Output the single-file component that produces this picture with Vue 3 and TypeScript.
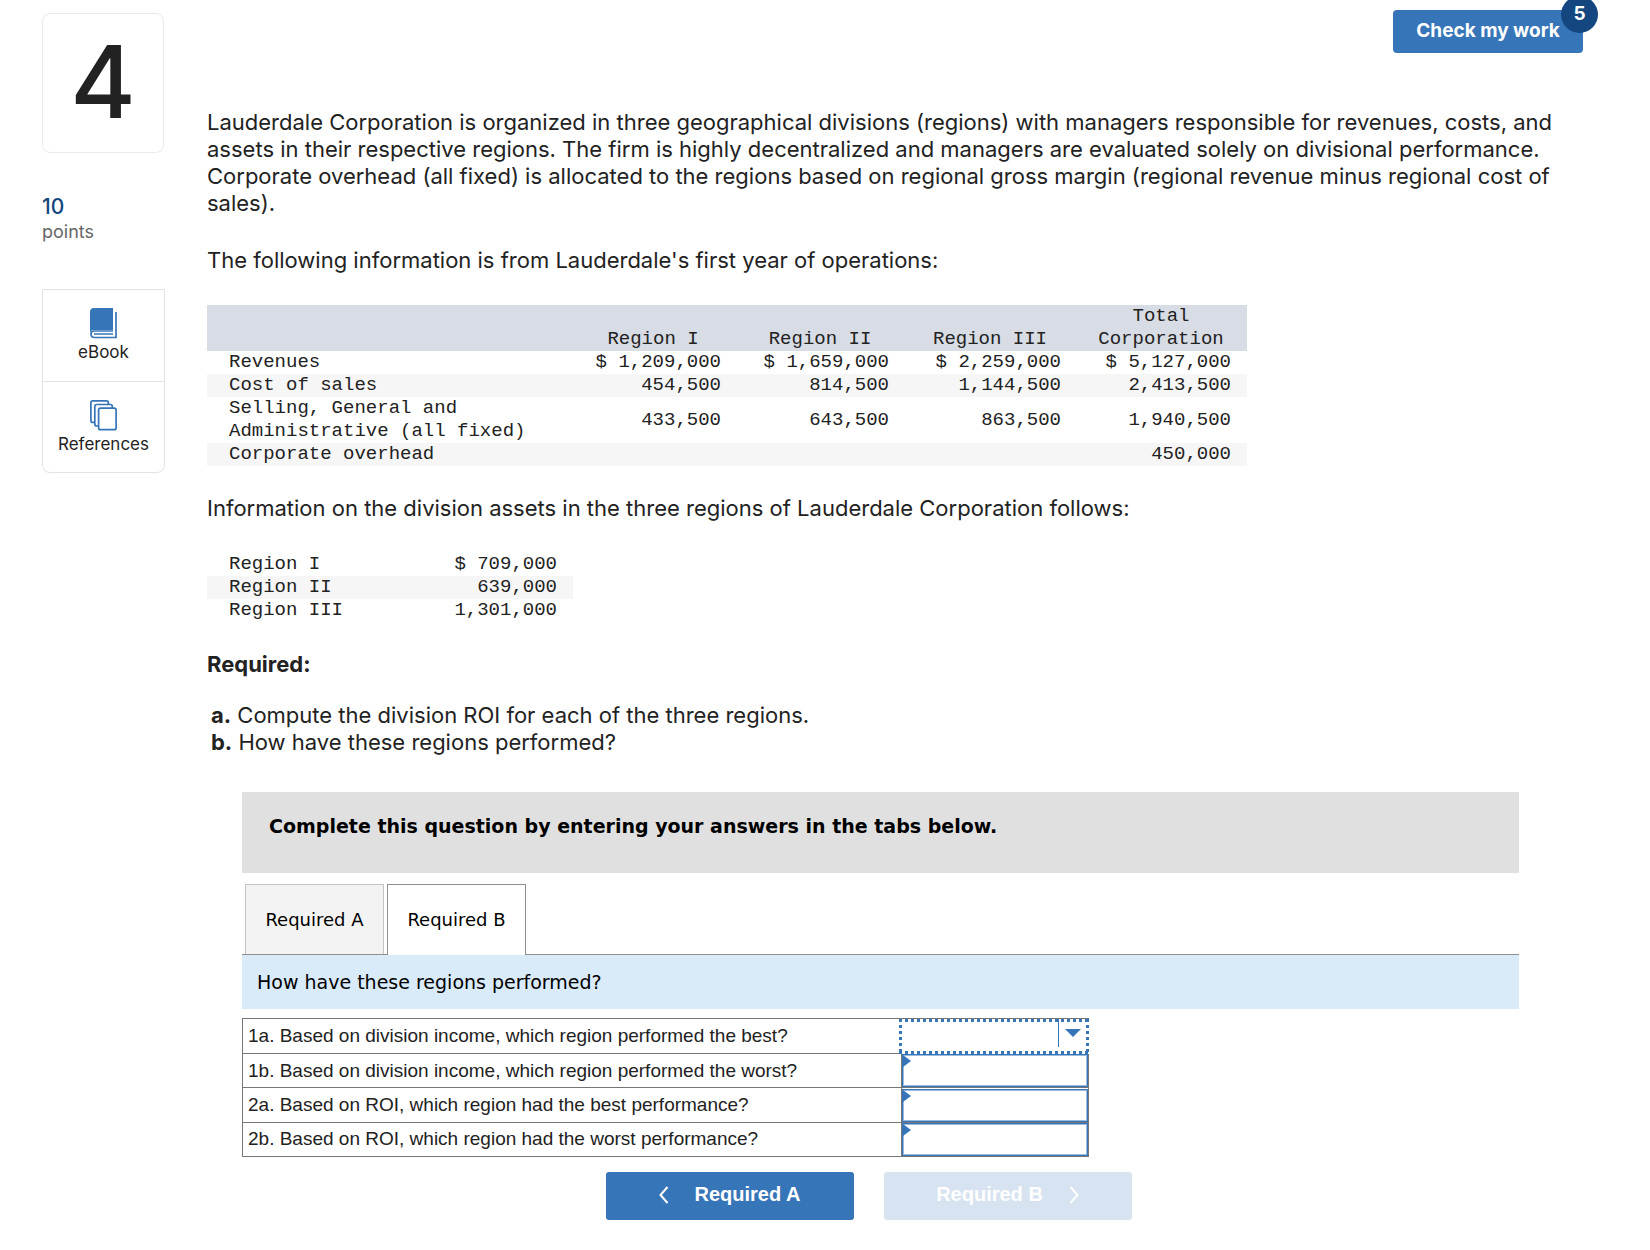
<script setup lang="ts">
import { ref } from 'vue'

const financials = [
  { label: 'Revenues', values: ['$ 1,209,000', '$ 1,659,000', '$ 2,259,000', '$ 5,127,000'] },
  { label: 'Cost of sales', values: ['454,500', '814,500', '1,144,500', '2,413,500'] },
  { label: 'Selling, General and Administrative (all fixed)', values: ['433,500', '643,500', '863,500', '1,940,500'] },
  { label: 'Corporate overhead', values: ['', '', '', '450,000'] },
]

const assets = [
  { label: 'Region I', value: '$ 709,000' },
  { label: 'Region II', value: '639,000' },
  { label: 'Region III', value: '1,301,000' },
]

const questions = [
  { id: 'q1a', text: '1a. Based on division income, which region performed the best?' },
  { id: 'q1b', text: '1b. Based on division income, which region performed the worst?' },
  { id: 'q2a', text: '2a. Based on ROI, which region had the best performance?' },
  { id: 'q2b', text: '2b. Based on ROI, which region had the worst performance?' },
]

const regions = ['Region I', 'Region II', 'Region III']
const answers = ref<Record<string, string>>({ q1a: '', q1b: '', q2a: '', q2b: '' })
const active = ref('q1a')
</script>

<template>
  <div class="page">
    <aside class="side">
      <div class="number">4</div>
      <div class="points"><strong>10</strong><span>points</span></div>
      <nav class="tools">
        <a href="#ebook">
          <svg width="27" height="31" viewBox="0 0 27 31" aria-hidden="true">
            <path d="M4 0H23V22H4Q2 22 1 23L0 25V4Q0 0 4 0Z" fill="#3775b9" />
            <path d="M4.500 23H23M4.500 23Q1 23 1 26Q1 29.500 4.500 29.500H26V4" fill="none" stroke="#3775b9" stroke-width="1.700" />
            <path d="M4 26H23" stroke="#3775b9" stroke-width="1.500" />
          </svg>
          <span>eBook</span>
        </a>
        <a href="#references">
          <svg width="27" height="31" viewBox="0 0 27 31" fill="#fff" stroke="#3775b9" stroke-width="1.700" aria-hidden="true">
            <rect x="0.900" y="0.900" width="17.500" height="21.500" rx="2" />
            <rect x="4.800" y="4.500" width="17.500" height="21.500" rx="2" />
            <rect x="8.600" y="8.200" width="17.500" height="21.500" rx="2" />
          </svg>
          <span>References</span>
        </a>
      </nav>
    </aside>

    <main class="main">
      <div class="toolbar">
        <button type="button" class="check">Check my work<span class="badge">5</span></button>
      </div>

      <section class="prose">
        <p>
          Lauderdale Corporation is organized in three geographical divisions (regions) with managers responsible for
          revenues, costs, and assets in their respective regions. The firm is highly decentralized and managers are
          evaluated solely on divisional performance. Corporate overhead (all fixed) is allocated to the regions based
          on regional gross margin (regional revenue minus regional cost of sales).
        </p>
        <p>The following information is from Lauderdale's first year of operations:</p>

        <table class="data financials">
          <colgroup>
            <col class="c-label" /><col class="c-one" /><col class="c-two" /><col class="c-three" /><col class="c-total" />
          </colgroup>
          <thead>
            <tr>
              <td></td>
              <th scope="col">Region I</th>
              <th scope="col">Region II</th>
              <th scope="col">Region III</th>
              <th scope="col">Total Corporation</th>
            </tr>
          </thead>
          <tbody>
            <tr v-for="row in financials" :key="row.label">
              <th scope="row">{{ row.label }}</th>
              <td v-for="(v, i) in row.values" :key="i">{{ v }}</td>
            </tr>
          </tbody>
        </table>

        <p>Information on the division assets in the three regions of Lauderdale Corporation follows:</p>

        <table class="data assets">
          <tbody>
            <tr v-for="row in assets" :key="row.label">
              <th scope="row">{{ row.label }}</th>
              <td>{{ row.value }}</td>
            </tr>
          </tbody>
        </table>

        <h2>Required:</h2>
        <ul>
          <li><b>a.</b> Compute the division ROI for each of the three regions.</li>
          <li><b>b.</b> How have these regions performed?</li>
        </ul>
      </section>

      <section class="answer">
        <div class="banner">Complete this question by entering your answers in the tabs below.</div>
        <div class="tabs" role="tablist">
          <button type="button" role="tab" aria-selected="false" class="tab">Required A</button>
          <button type="button" role="tab" aria-selected="true" class="tab current">Required B</button>
        </div>
        <div class="prompt">How have these regions performed?</div>

        <table class="questions">
          <tbody>
            <tr v-for="q in questions" :key="q.id">
              <th scope="row"><label :for="q.id">{{ q.text }}</label></th>
              <td>
                <div class="field" :class="{ active: active === q.id }">
                  <select :id="q.id" v-model="answers[q.id]" @focus="active = q.id">
                    <option value=""></option>
                    <option v-for="r in regions" :key="r">{{ r }}</option>
                  </select>
                </div>
              </td>
            </tr>
          </tbody>
        </table>

        <div class="pager">
          <button type="button">
            <svg width="10" height="18" viewBox="0 0 10 18" aria-hidden="true"><path d="M8.500 1L1.500 9L8.500 17" /></svg>
            Required A
          </button>
          <button type="button" disabled>
            Required B
            <svg width="10" height="18" viewBox="0 0 10 18" aria-hidden="true"><path d="M1.500 1L8.500 9L1.500 17" /></svg>
          </button>
        </div>
      </section>
    </main>
  </div>
</template>

<style>
body {
  margin: 0;
  background: #fff;
}
</style>

<style scoped>
.page {
  display: flex;
  gap: 42px;
  padding: 10px 67px 24px 42px;
  font-family: Inter, 'Open Sans', sans-serif;
  color: #222;
}

.side {
  flex: 0 0 123px;
  padding-top: 3px;
}
.number {
  box-sizing: border-box;
  height: 140px;
  margin-right: 1px;
  border: 1px solid #eaeaea;
  border-radius: 8px;
  font-size: 100px;
  font-weight: 500;
  line-height: 136px;
  text-align: center;
}
.points {
  display: flex;
  flex-direction: column;
  margin: 40px 0 46px;
}
.points strong {
  font-size: 21px;
  font-weight: 500;
  line-height: 28px;
  color: #14477f;
}
.points span {
  font-size: 18px;
  line-height: 22px;
  color: #666;
}
.tools {
  border: 1px solid #e3e3e3;
  border-radius: 0 0 8px 8px;
}
.tools a {
  display: flex;
  flex-direction: column;
  align-items: center;
  gap: 2px;
  box-sizing: border-box;
  height: 91px;
  padding-top: 18px;
  font-size: 17px;
  line-height: 22px;
  color: #222;
  text-decoration: none;
}
.tools a + a {
  border-top: 1px solid #e3e3e3;
}

.main {
  flex: 1;
  min-width: 0;
}
.toolbar {
  display: flex;
  justify-content: flex-end;
}
.check {
  position: relative;
  min-width: 190px;
  height: 43px;
  padding: 0 22px 3px;
  border: 0;
  border-radius: 4px;
  background: #3775b9;
  color: #fff;
  font: 700 19px Inter, sans-serif;
}
.badge {
  position: absolute;
  top: -14px;
  right: -15px;
  width: 37px;
  height: 37px;
  border-radius: 50%;
  background: #14477f;
  line-height: 35px;
}

.prose {
  padding: 56px 0 36px;
  font-size: 22px;
  line-height: 27px;
}
.prose p {
  margin: 0 16px 30px 0;
}
.data {
  border-collapse: collapse;
  table-layout: fixed;
  font-family: 'Liberation Mono', monospace;
  font-size: 19px;
  line-height: 23px;
}
.data th,
.data td {
  padding: 0;
  font-weight: 400;
}
.data tbody th {
  padding-left: 22px;
  text-align: left;
}
.data tbody td {
  padding-right: 16px;
  text-align: right;
}
.data tbody tr:nth-child(even) {
  background: #f6f6f6;
}
.data thead {
  background: #d8dce5;
}
.data thead th {
  padding-right: 2px;
  vertical-align: bottom;
}
.financials {
  width: 1040px;
  margin: 31px 0 29px;
}
.c-label {
  width: 364px;
}
.c-one {
  width: 166px;
}
.c-two {
  width: 168px;
}
.c-three {
  width: 172px;
}
.c-total {
  width: 170px;
}
.assets {
  width: 366px;
  margin: 31px 0 29px;
}
h2 {
  margin: 0 0 24px;
  font-size: 22px;
  font-weight: 700;
  line-height: 27px;
}
ul {
  margin: 0;
  padding: 0 0 0 4px;
  list-style: none;
}

.answer {
  margin: 0 64px 0 35px;
}
.banner {
  padding: 21px 27px 33px;
  background: #e0e0e0;
  color: #000;
  font: 700 19px/27px 'DejaVu Sans', Verdana, sans-serif;
}
.tabs {
  display: flex;
  gap: 3px;
  margin-top: 11px;
  padding-left: 3px;
  border-bottom: 1px solid #8f8f8f;
}
.tab {
  min-width: 139px;
  height: 70px;
  padding: 0 19px;
  border: 1px solid #c4c4c4;
  border-bottom: 0;
  background: #f3f3f3;
  color: #000;
  font: 18px 'DejaVu Sans', Verdana, sans-serif;
}
.tab.current {
  height: 71px;
  margin-bottom: -1px;
  padding-bottom: 1px;
  border-color: #8f8f8f;
  background: #fff;
}
.prompt {
  padding: 13px 15px;
  background: #d9eaf9;
  color: #000;
  font: 19px/28px 'DejaVu Sans', Verdana, sans-serif;
}

.questions {
  width: 847px;
  height: 139px;
  margin-top: 9px;
  border-collapse: collapse;
  table-layout: fixed;
  font: 19px/26px 'Liberation Sans', Arial, sans-serif;
}
.questions th,
.questions td {
  padding: 0;
  border: 1px solid #767676;
}
.questions th {
  padding-left: 5px;
  font-weight: 400;
  text-align: left;
}
.questions td {
  width: 186px;
}
.field {
  position: relative;
  box-sizing: border-box;
  height: 33px;
  border: 1px solid #3775b9;
  box-shadow: inset 0 0 0 1px #9bbadc;
}
.field::before {
  content: '';
  position: absolute;
  top: 0;
  left: 0;
  border: 6px solid transparent;
  border-left: 8px solid #3775b9;
  border-right: 0;
  pointer-events: none;
}
.field select {
  display: block;
  width: 100%;
  height: 100%;
  padding: 0 8px;
  border: 0;
  outline: 0;
  appearance: none;
  background: transparent;
  font: inherit;
}
.field.active {
  height: 35px;
  margin: 0 -1px -1px -3px;
  border: 0;
  box-shadow: none;
  background:
    repeating-linear-gradient(90deg, #3775b9 0 3px, transparent 3px 6px) top / 100% 3px no-repeat,
    repeating-linear-gradient(90deg, #3775b9 0 3px, transparent 3px 6px) bottom / 100% 3px no-repeat,
    repeating-linear-gradient(#3775b9 0 3px, transparent 3px 6px) left / 3px 100% no-repeat,
    repeating-linear-gradient(#3775b9 0 3px, transparent 3px 6px) right / 3px 100% no-repeat,
    #fff;
}
.field.active::before {
  top: 10px;
  right: 8px;
  left: auto;
  border: 8px solid transparent;
  border-top-color: #3775b9;
  border-bottom: 0;
}
.field.active::after {
  content: '';
  position: absolute;
  top: 0;
  right: 30px;
  width: 1px;
  height: 28px;
  background: #3775b9;
}

.pager {
  display: flex;
  justify-content: center;
  gap: 30px;
  margin: 15px 24px 0 0;
}
.pager button {
  display: flex;
  align-items: center;
  justify-content: center;
  gap: 26px;
  width: 248px;
  height: 48px;
  padding: 0 0 3px;
  border: 0;
  border-radius: 3px;
  background: #3775b9;
  color: #fff;
  font: 700 20px 'Liberation Sans', Arial, sans-serif;
}
.pager button:disabled {
  background: #d7e3f1;
}
.pager path {
  fill: none;
  stroke: #fff;
  stroke-width: 2;
}
</style>
